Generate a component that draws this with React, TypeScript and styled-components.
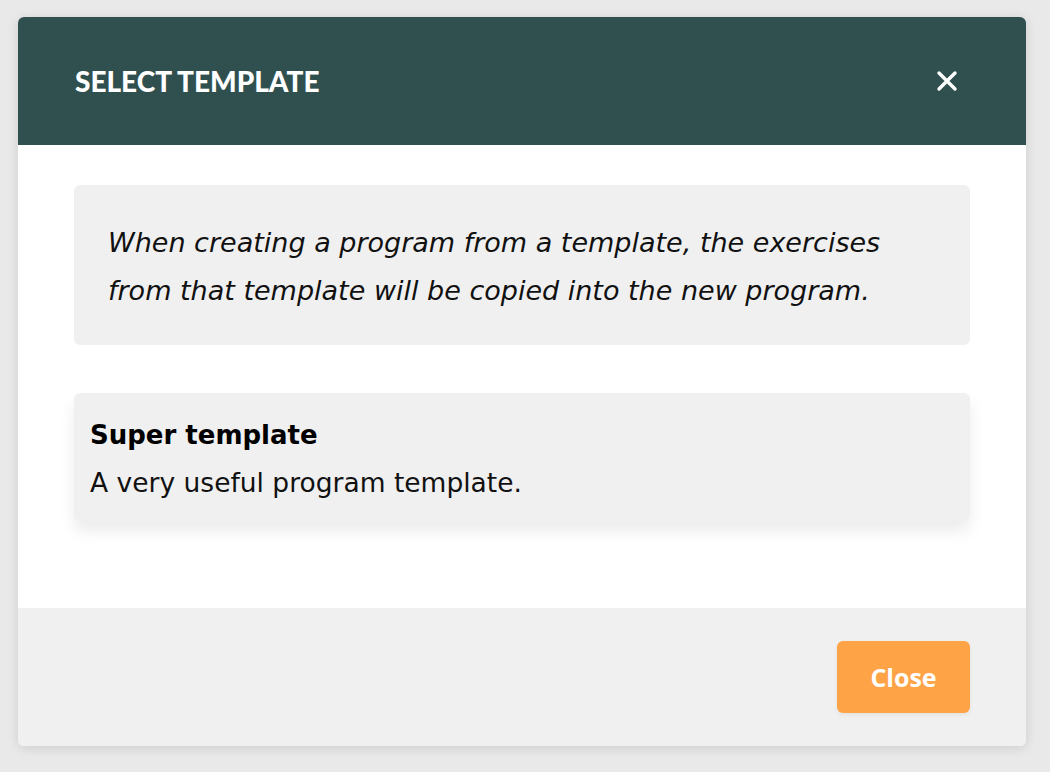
import styled, { createGlobalStyle } from "styled-components";

const GlobalStyle = createGlobalStyle`
  html, body {
    margin: 0;
    padding: 0;
    background: #e9e9e9;
    font-family: "DejaVu Sans", "Open Sans", sans-serif;
  }
`;

const Page = styled.div`
  width: 1050px;
  height: 772px;
  padding: 17px 24px 26px 18px;
  box-sizing: border-box;
`;

const Modal = styled.div`
  display: flex;
  flex-direction: column;
  height: 729px;
  border-radius: 6px;
  overflow: hidden;
  background: #ffffff;
  box-shadow: 0 2px 12px rgba(0, 0, 0, 0.12);
`;

const Header = styled.header`
  display: flex;
  align-items: center;
  justify-content: space-between;
  height: 128px;
  padding: 0 68px 0 57px;
  background: #2f504f;
  color: #ffffff;
  box-sizing: border-box;
`;

const Title = styled.h1`
  margin: 0;
  font-family: Lato, sans-serif;
  font-size: 28px;
  font-weight: 900;
  text-transform: uppercase;
`;

const CloseIcon = styled.button`
  display: flex;
  padding: 0;
  border: none;
  background: none;
  cursor: pointer;
`;

const Body = styled.main`
  flex: 1;
  display: flex;
  flex-direction: column;
  gap: 48px;
  padding: 40px 56px 0;
`;

const Notice = styled.div`
  padding: 34px 34px 30px;
  background: #f0f0f0;
  border-radius: 6px;
  font-size: 27px;
  font-style: italic;
  line-height: 48px;
  color: #111;
`;

const TemplateCard = styled.div`
  padding: 20px 16px 12px;
  background: #f0f0f0;
  border-radius: 6px;
  box-shadow: 0 10px 16px rgba(0, 0, 0, 0.08);
  cursor: pointer;
`;

const CardTitle = styled.div`
  font-size: 26px;
  font-weight: 700;
  line-height: 44px;
  color: #000;
`;

const CardText = styled.div`
  font-size: 26.5px;
  line-height: 52px;
  color: #111;
`;

const Footer = styled.footer`
  display: flex;
  justify-content: flex-end;
  align-items: center;
  height: 138px;
  padding: 0 56px 0 0;
  background: #f0f0f0;
  box-sizing: border-box;
`;

const Button = styled.button`
  width: 133px;
  height: 72px;
  border: none;
  border-radius: 6px;
  background: #ffa347;
  box-shadow: 0 2px 4px rgba(0, 0, 0, 0.06);
  color: #ffffff;
  font-family: "Open Sans", sans-serif;
  font-size: 25px;
  font-weight: 700;
  cursor: pointer;
`;

export default function App() {
  return (
    <>
      <GlobalStyle />
      <Page>
        <Modal>
          <Header>
            <Title>Select template</Title>
            <CloseIcon aria-label="Close">
              <svg width="22" height="22" viewBox="0 0 22 22">
                <path
                  d="M3 3 L19 19 M19 3 L3 19"
                  stroke="#ffffff"
                  strokeWidth="3.4"
                  strokeLinecap="round"
                />
              </svg>
            </CloseIcon>
          </Header>
          <Body>
            <Notice>
              When creating a program from a template, the exercises from that
              template will be copied into the new program.
            </Notice>
            <TemplateCard>
              <CardTitle>Super template</CardTitle>
              <CardText>A very useful program template.</CardText>
            </TemplateCard>
          </Body>
          <Footer>
            <Button>Close</Button>
          </Footer>
        </Modal>
      </Page>
    </>
  );
}
